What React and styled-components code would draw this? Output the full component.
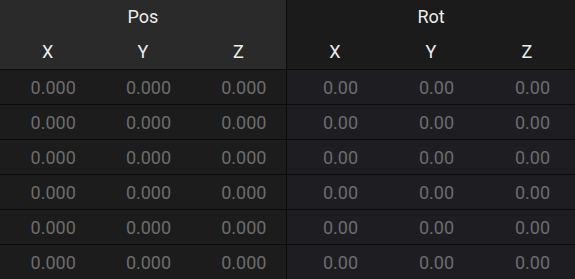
import React from "react";
import styled, { createGlobalStyle } from "styled-components";

const GlobalStyle = createGlobalStyle`
  html, body {
    margin: 0;
    padding: 0;
    background: #1b1b1b;
    overflow: hidden;
  }
  body {
    font-family: Roboto, "Liberation Sans", Arial, sans-serif;
  }
`;

const Table = styled.div`
  display: grid;
  grid-template-columns: 287px 288px;
  width: 575px;
`;

const Group = styled.div`
  display: flex;
  flex-direction: column;
  border-right: ${(p) => (p.$divider ? "1px solid #0b0b0b" : "none")};
`;

const GroupHead = styled.div`
  background: ${(p) => p.$bg};
  border-bottom: 1px solid #0b0b0b;
`;

const GroupTitle = styled.div`
  height: 34px;
  display: flex;
  align-items: center;
  justify-content: center;
  color: #ececec;
  font-size: 18px;
  line-height: 1;
`;

const AxisRow = styled.div`
  display: grid;
  grid-template-columns: repeat(3, 1fr);
  height: 35px;
`;

const Axis = styled.div`
  display: flex;
  align-items: center;
  justify-content: center;
  color: #ececec;
  font-size: 18px;
`;

const Row = styled.div`
  display: grid;
  grid-template-columns: repeat(3, 1fr);
  height: 34px;
  background: ${(p) => p.$bg};
  border-bottom: 1px solid #0b0b0b;
`;

const Value = styled.div`
  display: flex;
  align-items: center;
  justify-content: center;
  padding-left: 11px;
  color: #6c6c6c;
  font-size: 18px;
  font-variant-numeric: tabular-nums;
`;

const groups = [
  { title: "Pos", head: "#2a2a2a", body: "#1c1c1c", digits: 3 },
  { title: "Rot", head: "#1b1b1b", body: "#1e1e22", digits: 2 },
];

const axes = ["X", "Y", "Z"];
const rows = Array.from({ length: 6 }, () => [0, 0, 0]);

export default function App() {
  return (
    <>
      <GlobalStyle />
      <Table>
        {groups.map((g, gi) => (
          <Group key={g.title} $divider={gi === 0}>
            <GroupHead $bg={g.head}>
              <GroupTitle>{g.title}</GroupTitle>
              <AxisRow>
                {axes.map((a) => (
                  <Axis key={a}>{a}</Axis>
                ))}
              </AxisRow>
            </GroupHead>
            {rows.map((r, ri) => (
              <Row key={ri} $bg={g.body}>
                {r.map((v, vi) => (
                  <Value key={vi}>{v.toFixed(g.digits)}</Value>
                ))}
              </Row>
            ))}
          </Group>
        ))}
      </Table>
    </>
  );
}
